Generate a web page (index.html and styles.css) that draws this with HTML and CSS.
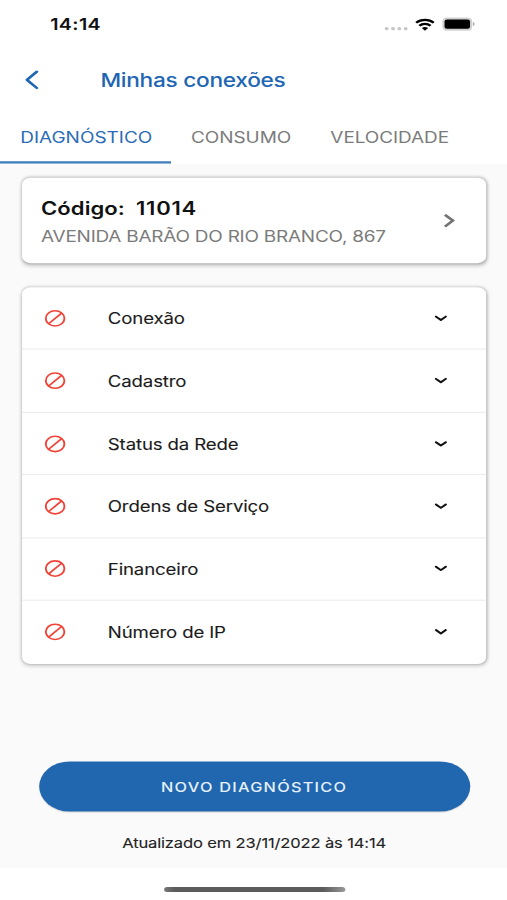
FILE: index.html
```html
<!DOCTYPE html>
<html lang="pt-BR">
<head>
<meta charset="utf-8">
<title>Minhas conexões</title>
<link rel="stylesheet" href="styles.css">
</head>
<body>
<svg class="defs" width="0" height="0">
  <symbol id="blocked" viewBox="0 0 18 18"><g fill="none" stroke="#f04438" stroke-width="1.55"><circle cx="9" cy="9" r="7.6"/><path d="M3.7 14.3 14.3 3.7"/></g></symbol>
  <symbol id="down" viewBox="0 0 12 8"><path d="M2 2.2 6 5.6 10 2.2" fill="none" stroke="#111" stroke-width="1.9" stroke-linecap="round" stroke-linejoin="round"/></symbol>
</svg>
<div class="screen">
  <div class="status">
    <span class="time">14:14</span>
    <div class="signals">
      <svg width="19" height="4" viewBox="0 0 19 4" fill="#c6c6c6"><circle cx="1.7" cy="1.6" r="1.6"/><circle cx="6.9" cy="1.6" r="1.6"/><circle cx="12.1" cy="1.6" r="1.6"/><circle cx="17.3" cy="1.6" r="1.6"/></svg>
      <svg class="wifi" width="16" height="13" viewBox="0 0 16 13"><g fill="none" stroke="#000" stroke-width="2.2"><path d="M.8 4.6a10.5 10.5 0 0 1 14.4 0"/><path d="M3.4 7.7a6.7 6.7 0 0 1 9.2 0"/></g><path d="M8 12.6 5.4 10a3.8 3.8 0 0 1 5.2 0z"/></svg>
      <svg class="battery" width="27" height="14" viewBox="0 0 27 14"><rect x=".2" y=".3" width="24.4" height="13.4" rx="4" fill="#d0d0d0"/><rect x="2" y="2.3" width="20.8" height="9.4" rx="2"/><path d="M25.2 5c1.8.7 1.8 3.3 0 4z" fill="#aaa"/></svg>
    </div>
  </div>
  <header class="bar">
    <svg class="back" width="12" height="20" viewBox="0 0 12 20"><path d="M10.1 1.4 2 9.6l8.1 8" fill="none" stroke="#1e66b3" stroke-width="2.4" stroke-linecap="round" stroke-linejoin="round"/></svg>
    <h1>Minhas conexões</h1>
  </header>
  <nav class="tabs">
    <span class="tab active">DIAGNÓSTICO</span>
    <span class="tab">CONSUMO</span>
    <span class="tab">VELOCIDADE</span>
  </nav>
  <main>
    <section class="card account">
      <div>
        <h2>Código:<span class="code">11014</span></h2>
        <p>AVENIDA BARÃO DO RIO BRANCO, 867</p>
      </div>
      <svg width="10" height="16" viewBox="0 0 10 16"><path d="M1.3 .8 7.8 6.6l-6.5 6" fill="none" stroke="#737373" stroke-width="2.4"/></svg>
    </section>
    <ul class="card list">
      <li><svg class="no"><use href="#blocked"/></svg><span>Conexão</span><svg class="down"><use href="#down"/></svg></li>
      <li><svg class="no"><use href="#blocked"/></svg><span>Cadastro</span><svg class="down"><use href="#down"/></svg></li>
      <li><svg class="no"><use href="#blocked"/></svg><span>Status da Rede</span><svg class="down"><use href="#down"/></svg></li>
      <li><svg class="no"><use href="#blocked"/></svg><span>Ordens de Serviço</span><svg class="down"><use href="#down"/></svg></li>
      <li><svg class="no"><use href="#blocked"/></svg><span>Financeiro</span><svg class="down"><use href="#down"/></svg></li>
      <li><svg class="no"><use href="#blocked"/></svg><span>Número de IP</span><svg class="down"><use href="#down"/></svg></li>
    </ul>
    <button class="run">NOVO DIAGNÓSTICO</button>
    <p class="updated">Atualizado em 23/11/2022 às 14:14</p>
  </main>
  <footer><div class="home"></div></footer>
</div>
</body>
</html>
```
FILE: styles.css
```css
* { box-sizing: border-box; margin: 0; padding: 0; }
html, body { width: 507px; height: 900px; overflow: hidden; background: #fff; }
body { font-family: Inter, "Liberation Sans", sans-serif; }
svg { display: block; flex: none; }
.defs { position: absolute; }

/* 414x896 layout stretched over the window */
.screen {
  width: 414px; height: 896px;
  display: flex; flex-direction: column;
  transform: scale(1.22464, 1.00446);
  transform-origin: 0 0;
  background: #fff;
}
.status { height: 48px; flex: none; display: flex; justify-content: space-between; padding: 0 26px 0 41px; }
.time { font-size: 16px; line-height: 49px; font-weight: 600; color: #111; letter-spacing: .3px; }
.signals { display: flex; align-items: center; height: 48px; }
.signals svg:first-child { margin-top: 9px; }
.wifi { margin-left: 6px; }
.battery { margin-left: 6px; }
.bar { height: 63px; flex: none; display: flex; align-items: center; padding-left: 20px; }
h1 { margin-left: 50px; font-size: 18.5px; font-weight: 500; color: #1e66b3; letter-spacing: -.23px; }
.tabs { height: 52px; flex: none; display: flex; }
.tab { height: 52px; padding: 0 16px; line-height: 51px; font-size: 15.5px; letter-spacing: -.06px; color: #7b7b7b; white-space: nowrap; }
.active { padding: 0 15.6px 0 16.5px; color: #2b6cb6; letter-spacing: 0; box-shadow: inset 0 -2.5px #3f7fbd; }
main { flex: 1; background: #fafafa; display: flex; flex-direction: column; padding: 14px 17px 0 18px; }
.card { background: #fff; border-radius: 7px; box-shadow: 0 0 3px rgba(0,0,0,.24), 0 2px 4px rgba(0,0,0,.17); }
.account { height: 85px; flex: none; display: flex; justify-content: space-between; align-items: center; padding: 2px 25.5px 0 15.5px; }
h2 { font-size: 18px; line-height: 29px; font-weight: 600; color: #111; white-space: nowrap; letter-spacing: .05px; }
.code { margin-left: 9px; letter-spacing: .65px; }
.account p { font-size: 15.5px; line-height: 27px; color: #7b7b7b; white-space: nowrap; letter-spacing: -.2px; }
.list { list-style: none; margin-top: 24px; }
.list li { height: 62.45px; display: flex; align-items: center; padding: 0 31px 0 18px; border-bottom: 1px solid #ebebeb; }
.list li:last-child { border-bottom: 0; }
.list span { flex: 1; margin-left: 34px; padding-top: 1px; font-size: 15.2px; letter-spacing: -.1px; color: #1b1b1b; -webkit-text-stroke: .1px #1b1b1b; }
.no { width: 18px; height: 18px; }
.down { width: 12px; height: 8px; }
.run { align-self: center; width: 352px; height: 50px; flex: none; margin: 97.5px 0 0; border: 0; border-radius: 25px; background: #2167b0; color: #e6f1fc; font: 500 13.3px Inter, sans-serif; letter-spacing: 1.02px; box-shadow: 0 1px 1px rgba(0,0,0,.14); }
.updated { margin-top: 21px; text-align: center; font-size: 13.5px; letter-spacing: -.12px; line-height: 20.5px; color: #222; -webkit-text-stroke: .1px #222; }
footer { height: 32px; flex: none; display: flex; justify-content: center; padding: 19px 0 0 1px; }
.home { width: 148px; height: 5px; border-radius: 3px; background: linear-gradient(90deg, #777, #5c5c5c 6%, #5c5c5c 88%, #999); }
```
